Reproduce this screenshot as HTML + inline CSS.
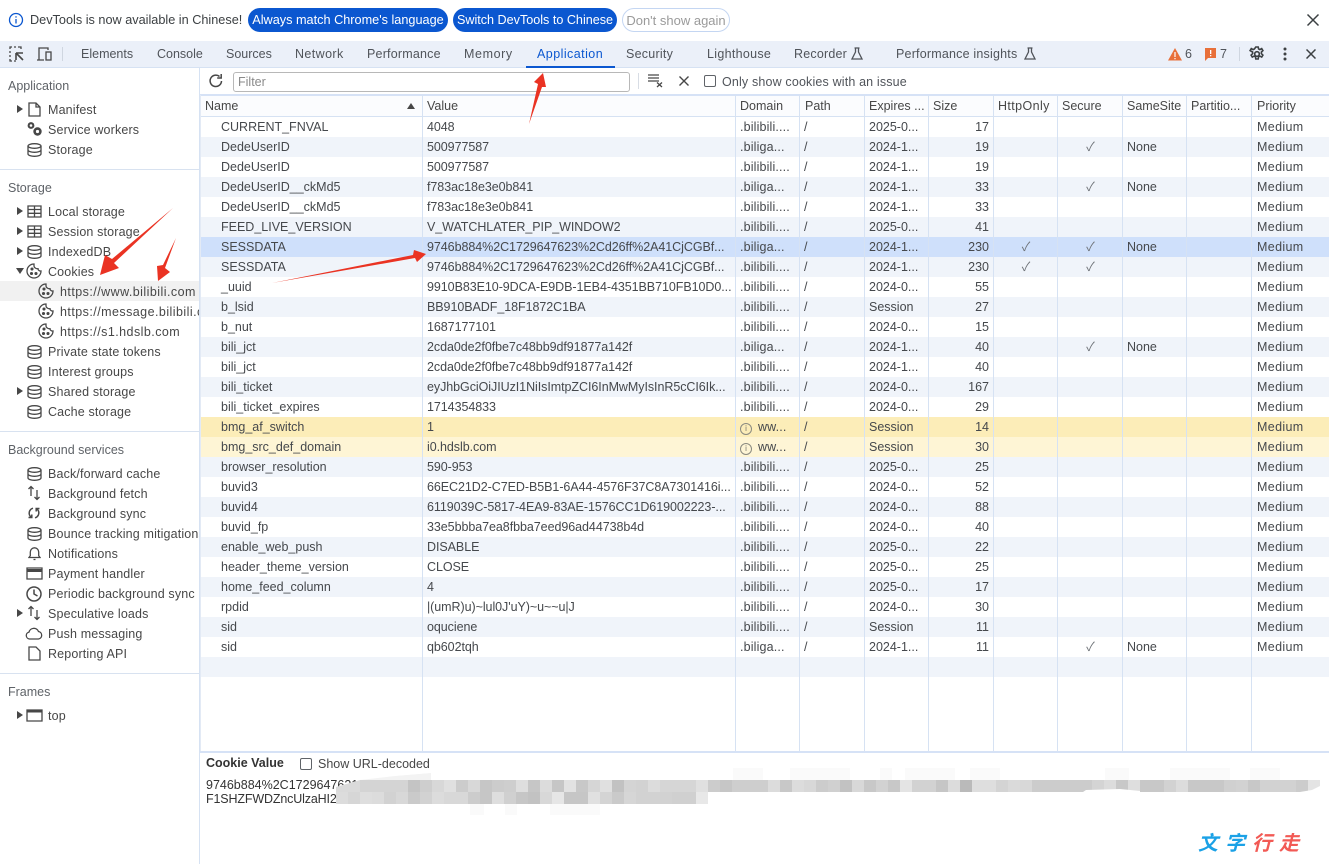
<!DOCTYPE html>
<html lang="en"><head><meta charset="utf-8"><title>DevTools</title>
<style>
html,body{margin:0;padding:0;background:#fff}
#p{position:relative;width:1329px;height:864px;overflow:hidden;background:#fff;font:12.5px/20px "Liberation Sans","Noto Sans CJK SC",sans-serif;color:#474747}
.a{position:absolute;white-space:nowrap}
.btn{position:absolute;top:8px;height:24px;border-radius:12px;background:#0b57d0;color:#fff;font-size:12.7px;line-height:25px;text-align:center;white-space:nowrap}
.tab{position:absolute;top:44px;white-space:nowrap;color:#50545a}
.s{position:absolute;left:48px;white-space:nowrap;color:#474747;letter-spacing:.15px}
.u{left:60px;letter-spacing:.45px}
.h{position:absolute;left:8px;white-space:nowrap;color:#5f6368}
.hr{position:absolute;left:0;width:199px;height:1px;background:#d8e2f0}
.t{position:absolute;width:0;height:0;border-style:solid;border-width:4px 0 4px 6px;border-color:transparent transparent transparent #474747;left:17px}
svg.i{position:absolute;fill:none;stroke:#474747;stroke-width:1.3}
table{position:absolute;left:200px;top:117px;width:1129px;border-collapse:collapse;table-layout:fixed;color:#45484c}
td{height:20px;padding:0 4px;overflow:hidden;white-space:nowrap;box-sizing:border-box;line-height:20px}
td:first-child{padding-left:21px}
td:nth-child(2){letter-spacing:-.06px}
td:nth-child(3){letter-spacing:.15px}
td:last-child{padding-left:5px;letter-spacing:.35px}
tr:nth-child(even){background:#f0f4fa}
tr.sel{background:#cfe0fb}
tr.y1{background:#fcedb8}
tr.y2{background:#fef5d5}
td.r{text-align:right;padding-right:5px}
td.c{text-align:center;color:#6d7176}
.v{position:absolute;top:95px;height:656px;width:1px;background:#d6e2f3}
.th{position:absolute;top:96px;color:#474747;white-space:nowrap}
.inf{display:inline-block;width:10px;height:10px;border:1px solid #8a8a80;border-radius:50%;font-size:8px;line-height:10px;text-align:center;margin-right:6px;vertical-align:0;box-sizing:content-box;color:#77776e;letter-spacing:0}
.r1 rect{y:780px;width:12px;height:12px}
.r2 rect{y:792px;width:12px;height:12px}
</style></head><body><div id="p">

<!-- infobar -->
<svg class="i" style="left:8px;top:12px;stroke:#0b57d0;stroke-width:1.3" width="16" height="16" viewBox="0 0 16 16"><circle cx="8" cy="8" r="6.5"/><path d="M8 7v4.5M8 4.2v1.4"/></svg>
<div class="a" style="left:30px;top:10px;font-size:12.7px;color:#3c4043;line-height:21px">DevTools is now available in Chinese!</div>
<div class="btn" style="left:248px;width:200px">Always match Chrome's language</div>
<div class="btn" style="left:453px;width:164px;font-size:12.6px">Switch DevTools to Chinese</div>
<div class="btn" style="left:622px;width:106px;background:#fff;border:1px solid #c4d6f2;color:#9a9a9a;height:22px;line-height:23px;font-size:13px">Don't show again</div>
<svg class="i" style="left:1306px;top:13px;stroke:#3c4043;stroke-width:1.5" width="14" height="14" viewBox="0 0 14 14"><path d="M1.5 1.5l11 11M12.5 1.5l-11 11"/></svg>

<!-- tab bar -->
<div class="a" style="left:0;top:41px;width:1329px;height:26px;background:#ebf0f9"></div>
<div class="a" style="left:0;top:67px;width:1329px;height:1px;background:#d6e2f3"></div>
<svg class="i" style="left:9px;top:46px;stroke:#474747" width="16" height="16" viewBox="0 0 16 16"><path d="M1 3V1h2M5 1h2M9 1h3v2M1 5v2M1 9v2M1 13v2h2M5 15h2"/><path d="M7 7h7M7 7v7M7 7l7 7" stroke-width="1.6"/></svg>
<svg class="i" style="left:36px;top:46px" width="17" height="16" viewBox="0 0 17 16"><path d="M3 14V2h9v2M1 14h7"/><rect x="10" y="6" width="5" height="8"/></svg>
<div class="a" style="left:62px;top:47px;width:1px;height:14px;background:#cfd6e0"></div>
<div class="tab" style="left:81px">Elements</div>
<div class="tab" style="left:157px">Console</div>
<div class="tab" style="left:226px">Sources</div>
<div class="tab" style="left:295px;letter-spacing:.4px">Network</div>
<div class="tab" style="left:367px;letter-spacing:.2px">Performance</div>
<div class="tab" style="left:464px;letter-spacing:.6px">Memory</div>
<div class="tab" style="left:537px;color:#0b57d0;letter-spacing:.45px">Application</div>
<div class="a" style="left:526px;top:66px;width:89px;height:2px;background:#0b57d0"></div>
<div class="tab" style="left:626px;letter-spacing:.25px">Security</div>
<div class="tab" style="left:707px;letter-spacing:.3px">Lighthouse</div>
<div class="tab" style="left:794px;letter-spacing:.2px">Recorder</div>
<svg class="i" style="left:851px;top:47px;stroke:#50545a" width="12" height="13" viewBox="0 0 12 13"><path d="M3.5 1h5M4.5 1v4L1 12h10L7.500 5V1"/></svg>
<div class="tab" style="left:896px;letter-spacing:.2px">Performance insights</div>
<svg class="i" style="left:1024px;top:47px;stroke:#50545a" width="12" height="13" viewBox="0 0 12 13"><path d="M3.500 1h5M4.500 1v4L1 12h10L7.500 5V1"/></svg>
<svg class="i" style="left:1168px;top:48px;stroke:none;fill:#e8703a" width="14" height="13" viewBox="0 0 14 13"><path d="M7 0l7 12.500H0z"/><path d="M6.400 4h1.200v5H6.400zM6.400 10h1.200v1.300H6.400z" fill="#fff"/></svg>
<div class="tab" style="left:1185px">6</div>
<svg class="i" style="left:1205px;top:48px;stroke:none;fill:#e8703a" width="12" height="13" viewBox="0 0 12 13"><path d="M0 0h11v10H3l-3 3z"/><path d="M5 2h1.300v4H5zM5 7h1.300v1.300H5z" fill="#fff"/></svg>
<div class="tab" style="left:1220px">7</div>
<div class="a" style="left:1239px;top:47px;width:1px;height:14px;background:#cfd6e0"></div>
<svg class="i" style="left:1249px;top:46px;stroke-width:1.6;stroke:#3c4043" width="16" height="16" viewBox="0 0 16 16"><circle cx="8" cy="8" r="2.300"/><path d="M6.800 1h2.400l.4 2 1.300.6 1.800-1 1.200 2-1.500 1.400v1.700l1.500 1.400-1.200 2-1.800-1-1.300.6-.4 2.300H6.800l-.4-2.300-1.300-.6-1.800 1-1.200-2 1.500-1.400V6L1.100 4.600l1.200-2 1.800 1 1.300-.6z"/></svg>
<svg class="i" style="left:1283px;top:47px;stroke:none;fill:#3c4043" width="4" height="14" viewBox="0 0 4 14"><circle cx="2" cy="2" r="1.500"/><circle cx="2" cy="7" r="1.500"/><circle cx="2" cy="12" r="1.500"/></svg>
<svg class="i" style="left:1306px;top:49px;stroke:#3c4043;stroke-width:1.500" width="10" height="10" viewBox="0 0 10 10"><path d="M.5.500l9 9M9.500.500l-9 9"/></svg>

<!-- sidebar -->
<div class="a" style="left:199px;top:68px;width:1px;height:796px;background:#d6e2f3"></div>
<div class="h" style="top:76px">Application</div>
<i class="t" style="top:105px"></i>
<svg class="i" style="left:28px;top:102px" width="13" height="15" viewBox="0 0 13 15"><path d="M1 1h7l4 4v9H1zM8 1v4h4"/></svg>
<div class="s" style="top:100px">Manifest</div>
<svg class="i" style="left:26px;top:121px;fill:#474747;stroke:none" width="17" height="16" viewBox="0 0 17 16"><circle cx="5" cy="4.500" r="3.400"/><circle cx="11.500" cy="10.500" r="4.200"/><circle cx="5" cy="4.500" r="1.300" fill="#fff"/><circle cx="11.500" cy="10.500" r="1.600" fill="#fff"/></svg>
<div class="s" style="top:120px">Service workers</div>
<svg class="i" style="left:27px;top:143px" width="15" height="14" viewBox="0 0 15 14"><ellipse cx="7.500" cy="3" rx="6.500" ry="2.300"/><path d="M1 3v8c0 1.300 3 2.300 6.500 2.300S14 12.300 14 11V3M1 7c0 1.300 3 2.300 6.500 2.300S14 8.300 14 7"/></svg>
<div class="s" style="top:140px">Storage</div>
<div class="hr" style="top:169px"></div>
<div class="h" style="top:178px">Storage</div>

<i class="t" style="top:207px"></i>
<svg class="i" style="left:27px;top:205px" width="15" height="13" viewBox="0 0 15 13"><path d="M1 1h13v11H1zM1 4.500h13M1 8.300h13M7.500 1v11"/></svg>
<div class="s" style="top:202px">Local storage</div>
<i class="t" style="top:227px"></i>
<svg class="i" style="left:27px;top:225px" width="15" height="13" viewBox="0 0 15 13"><path d="M1 1h13v11H1zM1 4.500h13M1 8.300h13M7.500 1v11"/></svg>
<div class="s" style="top:222px">Session storage</div>
<i class="t" style="top:247px"></i>
<svg class="i" style="left:27px;top:245px" width="15" height="14" viewBox="0 0 15 14"><ellipse cx="7.500" cy="3" rx="6.500" ry="2.300"/><path d="M1 3v8c0 1.300 3 2.300 6.500 2.300S14 12.300 14 11V3M1 7c0 1.300 3 2.300 6.500 2.300S14 8.300 14 7"/></svg>
<div class="s" style="top:242px">IndexedDB</div>
<i class="a" style="left:16px;top:268px;width:0;height:0;border-style:solid;border-width:6px 4px 0 4px;border-color:#474747 transparent transparent transparent"></i>
<svg class="i" style="left:26px;top:263px" width="16" height="16" viewBox="0 0 16 16"><path d="M8 1a7 7 0 1 0 7 7c-1.500.3-3-.8-3-2.300C10 6 8 4.500 8 3z"/><circle cx="6" cy="6" r=".9" fill="#474747"/><circle cx="5.500" cy="10.500" r=".9" fill="#474747"/><circle cx="10" cy="10.500" r=".9" fill="#474747"/></svg>
<div class="s" style="top:262px">Cookies</div>
<div class="a" style="left:0;top:281px;width:199px;height:20px;background:#f1f1f1"></div>
<svg class="i" style="left:38px;top:283px" width="16" height="16" viewBox="0 0 16 16"><path d="M8 1a7 7 0 1 0 7 7c-1.500.3-3-.8-3-2.300C10 6 8 4.500 8 3z"/><circle cx="6" cy="6" r=".9" fill="#474747"/><circle cx="5.500" cy="10.500" r=".9" fill="#474747"/><circle cx="10" cy="10.500" r=".9" fill="#474747"/></svg>
<div class="s u" style="top:282px">https://www.bilibili.com</div>
<svg class="i" style="left:38px;top:303px" width="16" height="16" viewBox="0 0 16 16"><path d="M8 1a7 7 0 1 0 7 7c-1.500.3-3-.8-3-2.300C10 6 8 4.500 8 3z"/><circle cx="6" cy="6" r=".9" fill="#474747"/><circle cx="5.500" cy="10.500" r=".9" fill="#474747"/><circle cx="10" cy="10.500" r=".9" fill="#474747"/></svg>
<div class="s u" style="top:302px;width:139px;overflow:hidden">https://message.bilibili.com</div>
<svg class="i" style="left:38px;top:323px" width="16" height="16" viewBox="0 0 16 16"><path d="M8 1a7 7 0 1 0 7 7c-1.500.3-3-.8-3-2.300C10 6 8 4.500 8 3z"/><circle cx="6" cy="6" r=".9" fill="#474747"/><circle cx="5.500" cy="10.500" r=".9" fill="#474747"/><circle cx="10" cy="10.500" r=".9" fill="#474747"/></svg>
<div class="s u" style="top:322px">https://s1.hdslb.com</div>
<svg class="i" style="left:27px;top:345px" width="15" height="14" viewBox="0 0 15 14"><ellipse cx="7.500" cy="3" rx="6.500" ry="2.300"/><path d="M1 3v8c0 1.300 3 2.300 6.500 2.300S14 12.300 14 11V3M1 7c0 1.300 3 2.300 6.500 2.300S14 8.300 14 7"/></svg>
<div class="s" style="top:342px">Private state tokens</div>
<svg class="i" style="left:27px;top:365px" width="15" height="14" viewBox="0 0 15 14"><ellipse cx="7.500" cy="3" rx="6.500" ry="2.300"/><path d="M1 3v8c0 1.300 3 2.300 6.500 2.300S14 12.300 14 11V3M1 7c0 1.300 3 2.300 6.500 2.300S14 8.300 14 7"/></svg>
<div class="s" style="top:362px">Interest groups</div>
<i class="t" style="top:387px"></i>
<svg class="i" style="left:27px;top:385px" width="15" height="14" viewBox="0 0 15 14"><ellipse cx="7.500" cy="3" rx="6.500" ry="2.300"/><path d="M1 3v8c0 1.300 3 2.300 6.500 2.300S14 12.300 14 11V3M1 7c0 1.300 3 2.300 6.500 2.300S14 8.300 14 7"/></svg>
<div class="s" style="top:382px">Shared storage</div>
<svg class="i" style="left:27px;top:405px" width="15" height="14" viewBox="0 0 15 14"><ellipse cx="7.500" cy="3" rx="6.500" ry="2.300"/><path d="M1 3v8c0 1.300 3 2.300 6.500 2.300S14 12.300 14 11V3M1 7c0 1.300 3 2.300 6.500 2.300S14 8.300 14 7"/></svg>
<div class="s" style="top:402px">Cache storage</div>
<div class="hr" style="top:431px"></div>
<div class="h" style="top:440px">Background services</div>
<svg class="i" style="left:27px;top:467px" width="15" height="14" viewBox="0 0 15 14"><ellipse cx="7.500" cy="3" rx="6.500" ry="2.300"/><path d="M1 3v8c0 1.300 3 2.300 6.500 2.300S14 12.300 14 11V3M1 7c0 1.300 3 2.300 6.500 2.300S14 8.300 14 7"/></svg>
<div class="s" style="top:464px">Back/forward cache</div>
<svg class="i" style="left:27px;top:485px" width="14" height="16" viewBox="0 0 14 16"><path d="M4 11V1.500M1.500 4L4 1.500 6.500 4M10 5v9.500M7.500 12l2.500 2.500 2.500-2.500"/></svg>
<div class="s" style="top:484px">Background fetch</div>
<svg class="i" style="left:27px;top:506px;stroke-width:1.500" width="14" height="14" viewBox="0 0 14 14"><path d="M6 2.200C3 3 1.500 6 2.500 9c.4 1 .9 1.500 1.700 2.200M8 11.800c3-.8 4.500-3.800 3.500-6.800-.4-1-.9-1.500-1.700-2.200M1.500 11.500h3.300V8.500M12.500 2.500H9.200v3"/></svg>
<div class="s" style="top:504px">Background sync</div>
<svg class="i" style="left:27px;top:527px" width="15" height="14" viewBox="0 0 15 14"><ellipse cx="7.500" cy="3" rx="6.500" ry="2.300"/><path d="M1 3v8c0 1.300 3 2.300 6.500 2.300S14 12.300 14 11V3M1 7c0 1.300 3 2.300 6.500 2.300S14 8.300 14 7"/></svg>
<div class="s" style="top:524px;width:151px;overflow:hidden">Bounce tracking mitigations</div>
<svg class="i" style="left:28px;top:546px" width="13" height="15" viewBox="0 0 13 15"><path d="M1 11.500h11l-1.300-1.800V6a4.200 4.200 0 0 0-8.400 0v3.700zM5.500 13.500h2"/></svg>
<div class="s" style="top:544px">Notifications</div>
<svg class="i" style="left:26px;top:567px" width="17" height="13" viewBox="0 0 17 13"><path d="M1 1h15v11H1z"/><path d="M1 3.500h15" stroke-width="3"/></svg>
<div class="s" style="top:564px">Payment handler</div>
<svg class="i" style="left:26px;top:586px;stroke-width:1.500" width="16" height="16" viewBox="0 0 16 16"><circle cx="8" cy="8" r="7"/><path d="M8 3.500V8l3.500 2"/></svg>
<div class="s" style="top:584px">Periodic background sync</div>
<i class="t" style="top:609px"></i>
<svg class="i" style="left:27px;top:605px" width="14" height="16" viewBox="0 0 14 16"><path d="M4 11V1.500M1.500 4L4 1.500 6.500 4M10 5v9.500M7.500 12l2.500 2.500 2.500-2.500"/></svg>
<div class="s" style="top:604px">Speculative loads</div>
<svg class="i" style="left:25px;top:627px" width="18" height="13" viewBox="0 0 18 13"><path d="M4.500 12a3.500 3.500 0 0 1-.5-6.900 5 5 0 0 1 9.500-.6 3.800 3.800 0 0 1 0 7.500z"/></svg>
<div class="s" style="top:624px">Push messaging</div>
<svg class="i" style="left:28px;top:646px" width="13" height="15" viewBox="0 0 13 15"><path d="M1 1h7l4 4v9H1z"/></svg>
<div class="s" style="top:644px">Reporting API</div>
<div class="hr" style="top:673px"></div>
<div class="h" style="top:682px">Frames</div>
<i class="t" style="top:711px"></i>
<svg class="i" style="left:26px;top:709px" width="17" height="13" viewBox="0 0 17 13"><path d="M1 1h15v11H1z"/><path d="M1 2.500h15" stroke-width="2"/></svg>
<div class="s" style="top:706px">top</div>

<!-- toolbar -->
<svg class="i" style="left:208px;top:73px;stroke-width:1.500;stroke:#474747" width="16" height="16" viewBox="0 0 16 16"><path d="M13.500 8A5.700 5.700 0 1 1 11.500 3.500"/><path d="M13.200 1v4h-4"/></svg>
<div class="a" style="left:233px;top:72px;width:395px;height:18px;border:1px solid #b8b8b8;border-radius:3px;line-height:18px;color:#8a8a8a;text-indent:4px">Filter</div>
<div class="a" style="left:638px;top:73px;width:1px;height:16px;background:#d8dde5"></div>
<svg class="i" style="left:648px;top:73px;stroke-width:1.300" width="16" height="15" viewBox="0 0 16 15"><path d="M0 2h11M0 5h11M0 8h11M9 9.500l5 4.500M14 9.500l-5 4.500"/></svg>
<svg class="i" style="left:679px;top:76px;stroke-width:1.400" width="10" height="10" viewBox="0 0 10 10"><path d="M.5.500l9 9M9.500.500l-9 9"/></svg>
<div class="a" style="left:704px;top:75px;width:10px;height:10px;border:1px solid #5f6368;border-radius:2px"></div>
<div class="a" style="left:722px;top:72px;color:#50545a;letter-spacing:.16px">Only show cookies with an issue</div>

<!-- table header -->
<div class="a" style="left:200px;top:94px;width:1129px;height:2px;background:#d6e2f6"></div>
<div class="a" style="left:200px;top:96px;width:1129px;height:20px;background:#fbfcfe"></div>
<div class="a" style="left:200px;top:116px;width:1129px;height:1px;background:#d6e2f3"></div>
<div class="th" style="left:205px">Name</div>
<i class="a" style="left:407px;top:103px;width:0;height:0;border-style:solid;border-width:0 4px 6px 4px;border-color:transparent transparent #474747 transparent"></i>
<div class="th" style="left:427px">Value</div>
<div class="th" style="left:740px">Domain</div>
<div class="th" style="left:805px">Path</div>
<div class="th" style="left:869px">Expires ...</div>
<div class="th" style="left:933px">Size</div>
<div class="th" style="left:998px;letter-spacing:.4px">HttpOnly</div>
<div class="th" style="left:1062px">Secure</div>
<div class="th" style="left:1127px">SameSite</div>
<div class="th" style="left:1191px">Partitio...</div>
<div class="th" style="left:1257px">Priority</div>

<table><colgroup><col style="width:223px"><col style="width:313px"><col style="width:64px"><col style="width:65px"><col style="width:64px"><col style="width:65px"><col style="width:64px"><col style="width:65px"><col style="width:64px"><col style="width:65px"><col style="width:77px"></colgroup><tbody>
<tr><td>CURRENT_FNVAL<td>4048<td>.bilibili....<td>/<td>2025-0...<td class="r">17<td><td><td><td><td>Medium</tr>
<tr><td>DedeUserID<td>500977587<td>.biliga...<td>/<td>2024-1...<td class="r">19<td><td class="c">✓<td>None<td><td>Medium</tr>
<tr><td>DedeUserID<td>500977587<td>.bilibili....<td>/<td>2024-1...<td class="r">19<td><td><td><td><td>Medium</tr>
<tr><td>DedeUserID__ckMd5<td>f783ac18e3e0b841<td>.biliga...<td>/<td>2024-1...<td class="r">33<td><td class="c">✓<td>None<td><td>Medium</tr>
<tr><td>DedeUserID__ckMd5<td>f783ac18e3e0b841<td>.bilibili....<td>/<td>2024-1...<td class="r">33<td><td><td><td><td>Medium</tr>
<tr><td>FEED_LIVE_VERSION<td>V_WATCHLATER_PIP_WINDOW2<td>.bilibili....<td>/<td>2025-0...<td class="r">41<td><td><td><td><td>Medium</tr>
<tr class="sel"><td>SESSDATA<td>9746b884%2C1729647623%2Cd26ff%2A41CjCGBf...<td>.biliga...<td>/<td>2024-1...<td class="r">230<td class="c">✓<td class="c">✓<td>None<td><td>Medium</tr>
<tr><td>SESSDATA<td>9746b884%2C1729647623%2Cd26ff%2A41CjCGBf...<td>.bilibili....<td>/<td>2024-1...<td class="r">230<td class="c">✓<td class="c">✓<td><td><td>Medium</tr>
<tr><td>_uuid<td>9910B83E10-9DCA-E9DB-1EB4-4351BB710FB10D0...<td>.bilibili....<td>/<td>2024-0...<td class="r">55<td><td><td><td><td>Medium</tr>
<tr><td>b_lsid<td>BB910BADF_18F1872C1BA<td>.bilibili....<td>/<td>Session<td class="r">27<td><td><td><td><td>Medium</tr>
<tr><td>b_nut<td>1687177101<td>.bilibili....<td>/<td>2024-0...<td class="r">15<td><td><td><td><td>Medium</tr>
<tr><td>bili_jct<td>2cda0de2f0fbe7c48bb9df91877a142f<td>.biliga...<td>/<td>2024-1...<td class="r">40<td><td class="c">✓<td>None<td><td>Medium</tr>
<tr><td>bili_jct<td>2cda0de2f0fbe7c48bb9df91877a142f<td>.bilibili....<td>/<td>2024-1...<td class="r">40<td><td><td><td><td>Medium</tr>
<tr><td>bili_ticket<td>eyJhbGciOiJIUzI1NiIsImtpZCI6InMwMyIsInR5cCI6Ik...<td>.bilibili....<td>/<td>2024-0...<td class="r">167<td><td><td><td><td>Medium</tr>
<tr><td>bili_ticket_expires<td>1714354833<td>.bilibili....<td>/<td>2024-0...<td class="r">29<td><td><td><td><td>Medium</tr>
<tr class="y1"><td>bmg_af_switch<td>1<td><span class="inf">i</span>ww...<td>/<td>Session<td class="r">14<td><td><td><td><td>Medium</tr>
<tr class="y2"><td>bmg_src_def_domain<td>i0.hdslb.com<td><span class="inf">i</span>ww...<td>/<td>Session<td class="r">30<td><td><td><td><td>Medium</tr>
<tr><td>browser_resolution<td>590-953<td>.bilibili....<td>/<td>2025-0...<td class="r">25<td><td><td><td><td>Medium</tr>
<tr><td>buvid3<td>66EC21D2-C7ED-B5B1-6A44-4576F37C8A7301416i...<td>.bilibili....<td>/<td>2024-0...<td class="r">52<td><td><td><td><td>Medium</tr>
<tr><td>buvid4<td>6119039C-5817-4EA9-83AE-1576CC1D619002223-...<td>.bilibili....<td>/<td>2024-0...<td class="r">88<td><td><td><td><td>Medium</tr>
<tr><td>buvid_fp<td>33e5bbba7ea8fbba7eed96ad44738b4d<td>.bilibili....<td>/<td>2024-0...<td class="r">40<td><td><td><td><td>Medium</tr>
<tr><td>enable_web_push<td>DISABLE<td>.bilibili....<td>/<td>2025-0...<td class="r">22<td><td><td><td><td>Medium</tr>
<tr><td>header_theme_version<td>CLOSE<td>.bilibili....<td>/<td>2025-0...<td class="r">25<td><td><td><td><td>Medium</tr>
<tr><td>home_feed_column<td>4<td>.bilibili....<td>/<td>2025-0...<td class="r">17<td><td><td><td><td>Medium</tr>
<tr><td>rpdid<td>|(umR)u)~lul0J'uY)~u~~u|J<td>.bilibili....<td>/<td>2024-0...<td class="r">30<td><td><td><td><td>Medium</tr>
<tr><td>sid<td>oquciene<td>.bilibili....<td>/<td>Session<td class="r">11<td><td><td><td><td>Medium</tr>
<tr><td>sid<td>qb602tqh<td>.biliga...<td>/<td>2024-1...<td class="r">11<td><td class="c">✓<td>None<td><td>Medium</tr>
<tr><td>&nbsp;<td><td><td><td><td><td><td><td><td><td></tr>
</tbody></table>

<div class="v" style="left:200px;background:#e3eaf5"></div>
<div class="v" style="left:422px"></div><div class="v" style="left:735px"></div><div class="v" style="left:799px"></div><div class="v" style="left:864px"></div><div class="v" style="left:928px"></div><div class="v" style="left:993px"></div><div class="v" style="left:1057px"></div><div class="v" style="left:1122px"></div><div class="v" style="left:1186px"></div><div class="v" style="left:1251px"></div>

<!-- details -->
<div class="a" style="left:200px;top:751px;width:1129px;height:2px;background:#d6e2f6"></div>
<div class="a" style="left:206px;top:753px;font-weight:bold;color:#333">Cookie Value</div>
<div class="a" style="left:300px;top:758px;width:10px;height:10px;border:1px solid #5f6368;border-radius:2px"></div>
<div class="a" style="left:318px;top:754px;color:#474747">Show URL-decoded</div>
<div class="a" style="left:206px;top:775px;color:#333">9746b884%2C17296476211</div>
<div class="a" style="left:206px;top:789px;color:#333;letter-spacing:-.15px">F1SHZFWDZncUlzaHI2</div>

<!-- blurred value mosaic -->
<svg class="a" style="left:0;top:0" width="1329" height="864" viewBox="0 0 1329 864" shape-rendering="crispEdges">
<g fill="#fafafa"><rect x="733" y="768" width="30" height="12"/><rect x="790" y="768" width="60" height="12"/><rect x="880" y="768" width="12" height="12"/><rect x="905" y="768" width="50" height="12"/><rect x="970" y="768" width="30" height="12"/><rect x="1105" y="768" width="24" height="12"/><rect x="1170" y="768" width="60" height="12"/><rect x="1250" y="768" width="30" height="12"/><rect x="470" y="804" width="14" height="11"/><rect x="505" y="804" width="12" height="11"/><rect x="550" y="804" width="50" height="11"/></g>
<g class="r1">
<rect x="360" fill="#d4d4d4"/><rect x="372" fill="#d4d4d4"/><rect x="384" fill="#d4d4d4"/><rect x="396" fill="#d4d4d4"/><rect x="408" fill="#c4c4c4"/><rect x="420" fill="#cecece"/><rect x="432" fill="#d8d8d8"/><rect x="444" fill="#e0e0e0"/><rect x="456" fill="#cccccc"/><rect x="468" fill="#d8d8d8"/><rect x="480" fill="#c6c6c6"/><rect x="492" fill="#cccccc"/><rect x="504" fill="#cecece"/><rect x="516" fill="#dedede"/><rect x="528" fill="#c6c6c6"/><rect x="540" fill="#dcdcdc"/><rect x="552" fill="#c6c6c6"/><rect x="564" fill="#e2e2e2"/><rect x="576" fill="#c8c8c8"/><rect x="588" fill="#d6d6d6"/><rect x="600" fill="#e0e0e0"/><rect x="612" fill="#c2c2c2"/><rect x="624" fill="#d4d4d4"/><rect x="636" fill="#d2d2d2"/><rect x="648" fill="#dcdcdc"/><rect x="660" fill="#d6d6d6"/><rect x="672" fill="#d6d6d6"/><rect x="684" fill="#d6d6d6"/><rect x="696" fill="#e0e0e0"/><rect x="708" fill="#cccccc"/><rect x="720" fill="#c6c6c6"/><rect x="732" fill="#cecece"/><rect x="744" fill="#cecece"/><rect x="756" fill="#cecece"/><rect x="768" fill="#dcdcdc"/><rect x="780" fill="#c8c8c8"/><rect x="792" fill="#dcdcdc"/><rect x="804" fill="#d8d8d8"/><rect x="816" fill="#cccccc"/><rect x="828" fill="#d0d0d0"/><rect x="840" fill="#c2c2c2"/><rect x="852" fill="#d8d8d8"/><rect x="864" fill="#c8c8c8"/><rect x="876" fill="#d2d2d2"/><rect x="888" fill="#c8c8c8"/><rect x="900" fill="#e4e4e4"/><rect x="912" fill="#d2d2d2"/><rect x="924" fill="#d2d2d2"/><rect x="936" fill="#c6c6c6"/><rect x="948" fill="#dcdcdc"/><rect x="960" fill="#bababa"/><rect x="972" fill="#dedede"/><rect x="984" fill="#dedede"/><rect x="996" fill="#d4d4d4"/><rect x="1008" fill="#dadada"/><rect x="1020" fill="#d8d8d8"/><rect x="1032" fill="#cccccc"/><rect x="1044" fill="#cccccc"/><rect x="1056" fill="#cccccc"/><rect x="1068" fill="#cccccc"/><rect x="1080" fill="#cccccc"/><rect x="1092" fill="#d4d4d4"/><rect x="1104" fill="#dcdcdc"/><rect x="1116" fill="#c8c8c8"/><rect x="1128" fill="#dedede"/><rect x="1140" fill="#c8c8c8"/><rect x="1152" fill="#c8c8c8"/><rect x="1164" fill="#d2d2d2"/><rect x="1176" fill="#dcdcdc"/><rect x="1188" fill="#c8c8c8"/><rect x="1200" fill="#c8c8c8"/><rect x="1212" fill="#c8c8c8"/><rect x="1224" fill="#d0d0d0"/><rect x="1236" fill="#d2d2d2"/><rect x="1248" fill="#c8c8c8"/><rect x="1260" fill="#d2d2d2"/><rect x="1272" fill="#d2d2d2"/><rect x="1284" fill="#d2d2d2"/><rect x="1296" fill="#cccccc"/><rect x="1308" fill="#e4e4e4"/>
</g>
<g class="r2">
<rect x="336" fill="#dcdcdc"/><rect x="348" fill="#d6d6d6"/><rect x="360" fill="#dedede"/><rect x="372" fill="#dcdcdc"/><rect x="384" fill="#d2d2d2"/><rect x="396" fill="#d8d8d8"/><rect x="408" fill="#cacaca"/><rect x="420" fill="#d2d2d2"/><rect x="432" fill="#dcdcdc"/><rect x="444" fill="#d8d8d8"/><rect x="456" fill="#d8d8d8"/><rect x="468" fill="#cccccc"/><rect x="480" fill="#c6c6c6"/><rect x="492" fill="#dedede"/><rect x="504" fill="#d0d0d0"/><rect x="516" fill="#c6c6c6"/><rect x="528" fill="#c2c2c2"/><rect x="540" fill="#d8d8d8"/><rect x="552" fill="#e6e6e6"/><rect x="564" fill="#c6c6c6"/><rect x="576" fill="#c6c6c6"/><rect x="588" fill="#e0e0e0"/><rect x="600" fill="#d4d4d4"/><rect x="612" fill="#cacaca"/><rect x="624" fill="#d6d6d6"/><rect x="636" fill="#d2d2d2"/><rect x="648" fill="#d2d2d2"/><rect x="660" fill="#d2d2d2"/><rect x="672" fill="#d0d0d0"/><rect x="684" fill="#d0d0d0"/><rect x="696" fill="#e8e8e8"/>
</g>
</svg>
<svg class="a" style="left:0;top:0" width="1329" height="864" viewBox="0 0 1329 864">
<path d="M336 787L360 780V792H336z" fill="#dadada"/>
<path d="M360 780L395 776 431 773V780z" fill="#f3f3f3"/>
<path d="M1083 792L1086 790 1120 789 1140 791V792zM1300 792L1312 790 1320 786V792z" fill="#fff"/>
</svg>

<!-- arrows -->
<svg class="a" style="left:0;top:0" width="1329" height="864" viewBox="0 0 1329 864">
<g fill="#ea3323">
<path d="M543 73L534 82 538 84 529 124 542 87 546 87z"/>
<path d="M173 208L112 259 105 255 100 275 119 268 114 263z"/>
<path d="M176 238L163 265 157 266 158 281 170 272 165 268z"/>
<path d="M272 283L413 255 414 250 426 254 417 262 415 258z"/>
</g></svg>

<!-- watermark -->
<div class="a" style="left:1198px;top:829px;font:italic bold 20px/26px 'WenQuanYi Zen Hei','Noto Sans CJK SC',sans-serif;letter-spacing:7px;color:#1ba1e6">文字<span style="color:#f25a55">行走</span></div>

</div></body></html>
